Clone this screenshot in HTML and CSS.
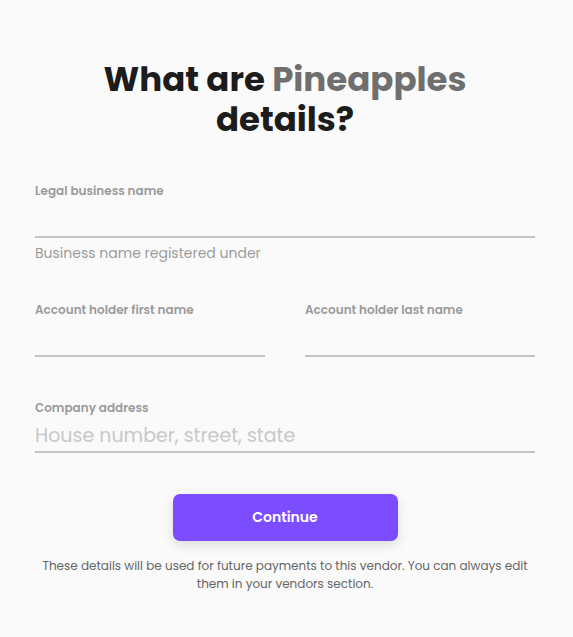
FILE: index.html
```html
<!DOCTYPE html>
<html lang="en">
<head>
<meta charset="utf-8">
<title>Vendor details</title>
<link rel="stylesheet" href="styles.css">
</head>
<body>
<main class="page">
  <h1 class="title">What are <span class="accent">Pineapples</span><br>details?</h1>
  <form class="form">
    <div class="field">
      <label class="label">Legal business name</label>
      <div class="input"></div>
      <div class="hint">Business name registered under</div>
    </div>
    <div class="row">
      <div class="field">
        <label class="label">Account holder first name</label>
        <div class="input"></div>
      </div>
      <div class="field">
        <label class="label">Account holder last name</label>
        <div class="input"></div>
      </div>
    </div>
    <div class="field address">
      <label class="label">Company address</label>
      <div class="input placeholder">House number, street, state</div>
    </div>
    <button type="button" class="btn">Continue</button>
    <p class="note">These details will be used for future payments to this vendor. You can always edit them in your vendors section.</p>
  </form>
</main>
</body>
</html>
```
FILE: styles.css
```css
* { box-sizing: border-box; }
html, body { margin: 0; padding: 0; }
body {
  background: #fafafa;
  font-family: "Poppins", "Inter", "Noto Sans", sans-serif;
  color: #1f1f1f;
}
.page {
  width: 500px;
  margin-left: 35px;
  padding-top: 59px;
  display: flex;
  flex-direction: column;
}
.title {
  margin: 0;
  text-align: center;
  font-size: 34px;
  line-height: 40px;
  font-weight: 700;
  color: #1c1c1c;
}
.accent { color: #6f6f6f; }
.form {
  margin-top: 44px;
  display: flex;
  flex-direction: column;
}
.field { display: flex; flex-direction: column; }
.label {
  font-size: 12px;
  font-weight: 600;
  color: #9a9a9a;
  line-height: 16px;
}
.input {
  height: 39px;
  border-bottom: 2px solid #c4c4c4;
}
.hint {
  margin-top: 5px;
  font-size: 14px;
  line-height: 20px;
  color: #9c9c9c;
}
.row {
  margin-top: 39px;
  display: grid;
  grid-template-columns: 1fr 1fr;
  column-gap: 40px;
}
.address { margin-top: 43px; }
.address .input {
  height: 37px;
  padding-top: 8px;
  font-size: 19px;
  line-height: 24px;
  color: #c8c8c8;
}
.btn {
  align-self: center;
  margin-top: 41px;
  width: 225px;
  height: 47px;
  border: none;
  border-radius: 7px;
  background: #7c4dff;
  color: #fff;
  font-family: inherit;
  font-size: 14px;
  font-weight: 600;
  box-shadow: 0 4px 12px rgba(0,0,0,0.12);
}
.note {
  margin: 16px 0 0;
  text-align: center;
  font-size: 12px;
  line-height: 18px;
  color: #666;
}
```
